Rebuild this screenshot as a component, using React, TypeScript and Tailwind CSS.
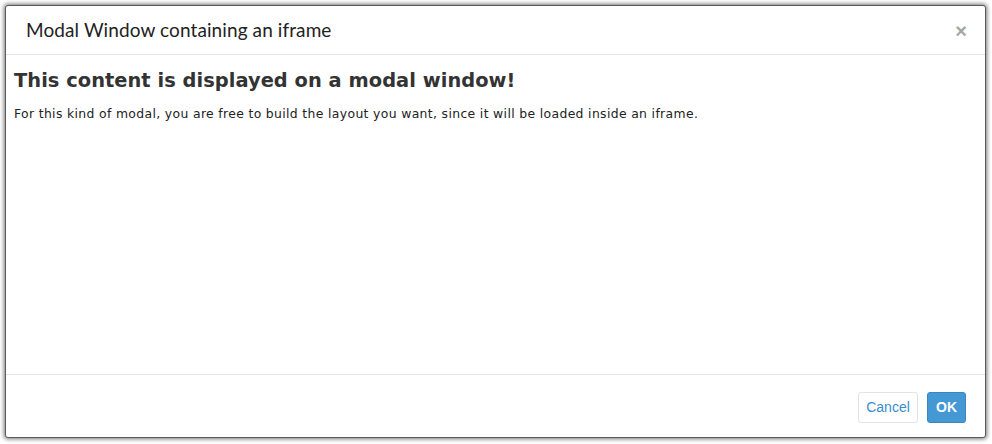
import React from "react";

export default function App() {
  return (
    <div className="w-[992px] h-[444px] bg-white pt-[5px] pl-[5px] overflow-hidden">
      <div className="w-[981px] h-[433px] bg-white border border-[#5a5a5a] rounded-[3px] shadow-[0_0_4px_1px_rgba(0,0,0,0.55)] flex flex-col">
        <div className="h-[49px] border-b border-[#e5e5e5] flex items-center justify-between pl-[20px] pr-[18px] shrink-0">
          <h1 className="text-[19px] text-[#222] pt-[1px] tracking-[0.1px]" style={{ fontFamily: "Lato, 'Open Sans', sans-serif", fontWeight: 400 }}>
            Modal Window containing an iframe
          </h1>
          <span className="text-[#a6a6a6] text-[20px] font-bold leading-none pt-[2px] [font-family:'Liberation_Sans',sans-serif]">×</span>
        </div>
        <div className="flex-1 px-[8px] pt-[14px] [font-family:'DejaVu_Sans',Verdana,sans-serif] text-[#333]">
          <h2 className="text-[19.4px] font-bold leading-[24px] tracking-[0.05px]">This content is displayed on a modal window!</h2>
          <p className="text-[12.4px] leading-[16px] mt-[13px] text-[#222] tracking-[0.35px]">
            For this kind of modal, you are free to build the layout you want, since it will be loaded inside an iframe.
          </p>
        </div>
        <div className="h-[63px] border-t border-[#e5e5e5] flex items-center justify-end gap-[9px] pr-[19px] pt-[2px] shrink-0 [font-family:'Liberation_Sans',Arial,sans-serif]">
          <button className="w-[60px] h-[31px] rounded-[3px] border border-[#e3e3e3] bg-white text-[#3a8ccf] text-[14px]">Cancel</button>
          <button className="w-[39px] h-[31px] rounded-[3px] border border-[#3b86bf] bg-[#4498d3] text-white text-[14px] font-bold">OK</button>
        </div>
      </div>
    </div>
  );
}
